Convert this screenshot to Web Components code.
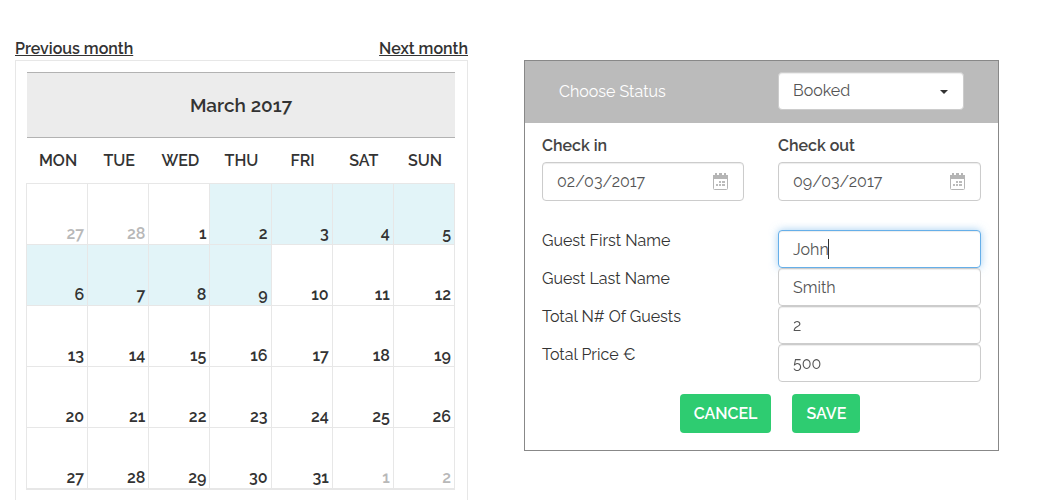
<!DOCTYPE html>
<html lang="en">
<head>
<meta charset="utf-8">
<title>Booking calendar</title>
<style>
  body {
    margin: 0;
    background: #fff;
    color: #333;
    font-family: Raleway, "Open Sans", sans-serif;
    font-size: 16px;
    line-height: 20px;
    font-variant-numeric: oldstyle-nums;
  }
</style>
</head>
<body>
<booking-page>
  <month-calendar slot="calendar" month="March 2017" lead="27,28" days="31" trail="1,2" from="2" to="9"></month-calendar>
  <booking-form slot="form"></booking-form>
</booking-page>

<script>
class BookingPage extends HTMLElement {
  connectedCallback() {
    this.attachShadow({ mode: 'open' });
    this.shadowRoot.innerHTML = `
      <style>
        :host {
          display: block;
          padding: 39px 46px 0 15px;
        }

        main {
          display: grid;
          grid-template-columns: 453fr 475fr;
          gap: 56px;
          align-items: start;
        }

        .form {
          padding-top: 21px;
        }
      </style>

      <main>
        <slot name="calendar"></slot>
        <div class="form"><slot name="form"></slot></div>
      </main>
    `;
  }
}

class MonthCalendar extends HTMLElement {
  connectedCallback() {
    this.attachShadow({ mode: 'open' });
    const names = ['MON', 'TUE', 'WED', 'THU', 'FRI', 'SAT', 'SUN'];
    const from = Number(this.getAttribute('from'));
    const to = Number(this.getAttribute('to'));
    const cells = [];

    this.getAttribute('lead').split(',').forEach(d => cells.push(`<td class="out">${d}</td>`));
    for (let d = 1; d <= Number(this.getAttribute('days')); d++) {
      cells.push(`<td class="${d >= from && d <= to ? 'booked' : ''}">${d}</td>`);
    }
    this.getAttribute('trail').split(',').forEach(d => cells.push(`<td class="out">${d}</td>`));

    let rows = '';
    for (let i = 0; i < cells.length; i += 7) {
      rows += `<tr>${cells.slice(i, i + 7).join('')}</tr>`;
    }

    this.shadowRoot.innerHTML = `
      <style>
        :host {
          display: block;
        }

        nav {
          display: flex;
          justify-content: space-between;
          height: 21px;
        }

        nav a {
          color: #333;
          font-weight: 600;
        }

        .panel {
          border: 1px solid #e7e7e7;
          padding: 11px 12px 10px 10px;
        }

        h2 {
          margin: 0 0 0 1px;
          padding: 22px 0;
          border-top: 1px solid #b2b2b2;
          border-bottom: 1px solid #b2b2b2;
          background: #ececec;
          font-size: 19px;
          font-weight: 600;
          line-height: 20px;
          text-align: center;
        }

        table {
          width: 100%;
          table-layout: fixed;
          border-collapse: collapse;
        }

        th {
          height: 45px;
          padding: 0 0 0 2px;
          font-weight: 600;
        }

        td {
          height: 61px;
          padding: 0 3px 0 0;
          border: 1px solid #e7e7e7;
          box-sizing: border-box;
          font-weight: 600;
          text-align: right;
          vertical-align: bottom;
        }

        tbody tr:last-child td {
          border-bottom-width: 2px;
        }

        .booked {
          background: #e2f4f8;
        }

        .out {
          color: #b8b8b8;
        }
      </style>

      <nav>
        <a href="#previous">Previous month</a>
        <a href="#next">Next month</a>
      </nav>
      <div class="panel">
        <h2>${this.getAttribute('month')}</h2>
        <table>
          <thead><tr>${names.map(n => `<th scope="col">${n}</th>`).join('')}</tr></thead>
          <tbody>${rows}</tbody>
        </table>
      </div>
    `;
  }
}

const inputStyles = `
  input, select {
    display: block;
    width: 100%;
    height: 38px;
    margin: 0;
    padding: 0 14px;
    border: 1px solid #ccc;
    border-radius: 4px;
    box-sizing: border-box;
    background: #fff;
    box-shadow: inset 0 1px 1px rgba(0, 0, 0, 0.075);
    color: #555;
    font: inherit;
    font-variant-numeric: inherit;
    outline: none;
  }
`;

// Label on top, calendar icon inside the box
class DateField extends HTMLElement {
  connectedCallback() {
    this.attachShadow({ mode: 'open' });
    this.shadowRoot.innerHTML = `
      <style>
        ${inputStyles}

        :host {
          display: block;
        }

        label {
          display: block;
          margin-bottom: 6px;
          color: #444;
          font-weight: 600;
        }

        .box {
          position: relative;
        }

        input {
          height: 39px;
        }

        svg {
          position: absolute;
          top: 11px;
          right: 16px;
          pointer-events: none;
        }
      </style>

      <label for="date"><slot></slot></label>
      <div class="box">
        <input id="date" type="text" value="${this.getAttribute('value')}">
        <svg width="15" height="17" viewBox="0 0 15 17" aria-hidden="true">
          <rect x="0.5" y="2.5" width="14" height="14" rx="1" fill="#fff" stroke="#b5b5b5"/>
          <path d="M0 2h2v1h2V2h2v1h3V2h2v1h2V2h2v4H0z" fill="#b5b5b5"/>
          <path d="M2 0h2v2H2zM6 0h3v2H6zM11 0h2v2h-2z" fill="#b5b5b5"/>
          <path d="M6 8h2v2H6zM9 8h3v2H9zM3 11h2v2H3zM6 11h2v2H6zM9 11h3v2H9z" fill="#bbb"/>
        </svg>
      </div>
    `;
  }
}

// Label on the left, input on the right
class TextField extends HTMLElement {
  connectedCallback() {
    this.attachShadow({ mode: 'open' });
    this.shadowRoot.innerHTML = `
      <style>
        ${inputStyles}

        :host {
          display: grid;
          grid-template-columns: 202fr 203fr;
          gap: 34px;
        }

        label {
          padding-top: 1px;
          color: #333;
        }

        .box {
          position: relative;
        }

        input {
          caret-color: transparent;
        }

        input:focus {
          border-color: #66afe9;
          box-shadow: inset 0 1px 1px rgba(0, 0, 0, 0.075), 0 0 8px rgba(102, 175, 233, 0.6);
        }

        .caret {
          position: absolute;
          top: 9px;
          left: 50px;
          width: 1px;
          height: 20px;
          background: #333;
        }
      </style>

      <label for="field"><slot></slot></label>
      <div class="box">
        <input id="field" type="text" value="${this.getAttribute('value')}">
        ${this.hasAttribute('active') ? '<span class="caret"></span>' : ''}
      </div>
    `;
    if (this.hasAttribute('active')) {
      const input = this.shadowRoot.querySelector('input');
      input.focus();
      input.setSelectionRange(input.value.length, input.value.length);
    }
  }
}

class ActionButton extends HTMLElement {
  connectedCallback() {
    this.attachShadow({ mode: 'open' });
    this.shadowRoot.innerHTML = `
      <style>
        :host {
          display: block;
        }

        button {
          height: 39px;
          padding: 0 14px;
          border: 0;
          border-radius: 4px;
          background: #2ecc71;
          color: #fff;
          font: inherit;
          font-weight: 600;
        }
      </style>

      <button type="button"><slot></slot></button>
    `;
  }
}

class BookingForm extends HTMLElement {
  connectedCallback() {
    this.attachShadow({ mode: 'open' });
    this.shadowRoot.innerHTML = `
      <style>
        ${inputStyles}

        :host {
          display: block;
          border: 1px solid #888;
        }

        .status, .dates {
          display: grid;
          grid-template-columns: 202fr 203fr;
          column-gap: 34px;
          padding: 0 17px;
        }

        .status {
          padding: 11px 17px;
          background: #bbb;
        }

        .status label {
          padding-left: 17px;
          color: #fff;
          line-height: 40px;
        }

        .select {
          position: relative;
          margin-right: 17px;
        }

        .select::after {
          content: "";
          position: absolute;
          top: 18px;
          right: 16px;
          border: 4px solid transparent;
          border-top-color: #333;
          border-bottom: 0;
          pointer-events: none;
        }

        select {
          appearance: none;
        }

        .dates {
          padding-top: 13px;
        }

        .fields {
          padding: 29px 17px 0;
        }

        .buttons {
          display: flex;
          justify-content: center;
          gap: 21px;
          padding: 12px 0 17px 17px;
        }
      </style>

      <form>
        <div class="status">
          <label for="status">Choose Status</label>
          <div class="select">
            <select id="status"><option>Booked</option></select>
          </div>
        </div>
        <div class="dates">
          <date-field value="02/03/2017">Check in</date-field>
          <date-field value="09/03/2017">Check out</date-field>
        </div>
        <div class="fields">
          <text-field value="John" active>Guest First Name</text-field>
          <text-field value="Smith">Guest Last Name</text-field>
          <text-field value="2">Total N# Of Guests</text-field>
          <text-field value="500">Total Price €</text-field>
        </div>
        <div class="buttons">
          <action-button>CANCEL</action-button>
          <action-button>SAVE</action-button>
        </div>
      </form>
    `;
  }
}

customElements.define('booking-page', BookingPage);
customElements.define('month-calendar', MonthCalendar);
customElements.define('date-field', DateField);
customElements.define('text-field', TextField);
customElements.define('action-button', ActionButton);
customElements.define('booking-form', BookingForm);
</script>
</body>
</html>
